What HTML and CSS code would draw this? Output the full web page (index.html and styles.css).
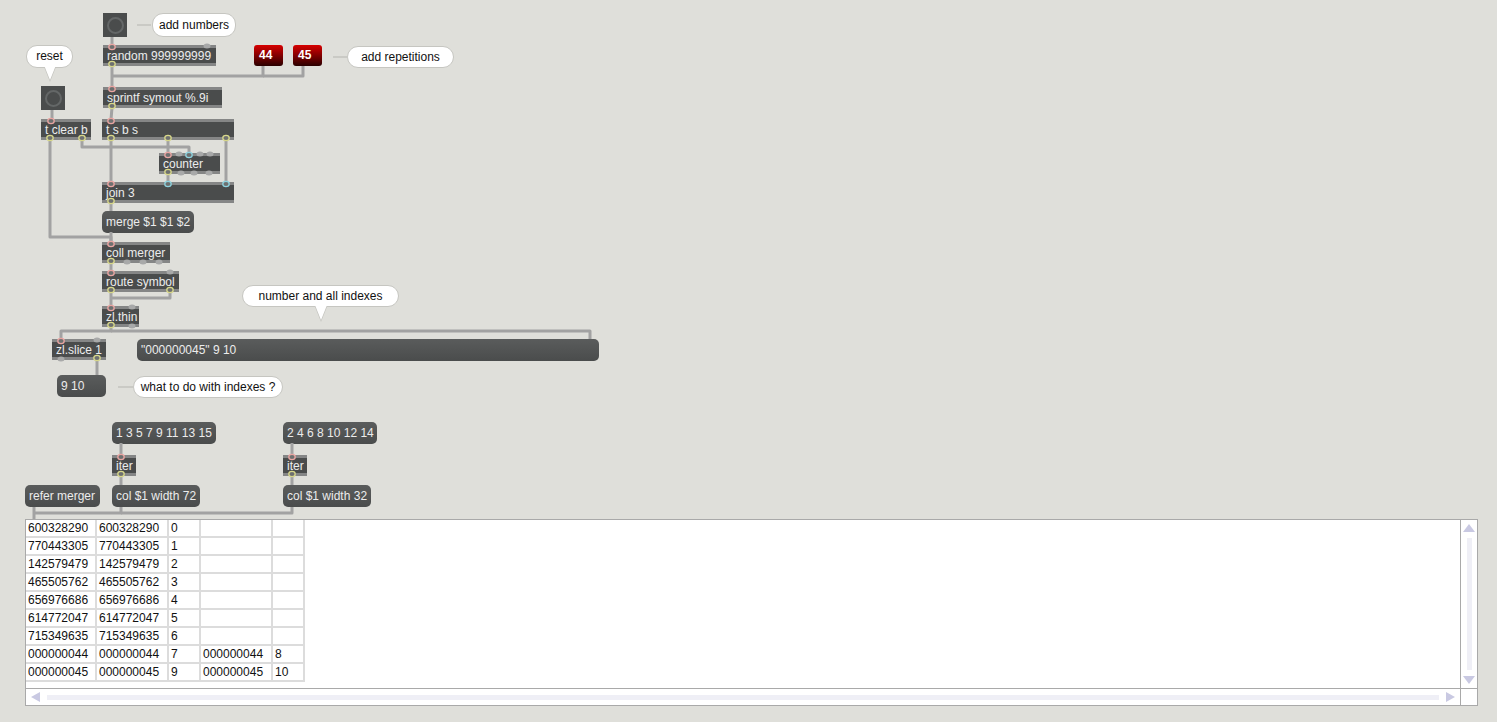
FILE: index.html
```html
<!DOCTYPE html>
<html lang="en">

<head>
    <meta charset="utf-8">
    <title>merger patch</title>
    <link rel="stylesheet" href="styles.css">
</head>

<body>
    <div class="patcher">
        <!-- top section: number generator -->
        <div class="bang bang-add"><span></span></div>
        <div class="cmt cmt-add">add numbers</div>
        <div class="obj o-random">random 999999999</div>
        <div class="num n44">44</div>
        <div class="num n45">45</div>
        <div class="cmt cmt-rep">add repetitions</div>
        <div class="cmt cmt-reset">reset</div>
        <div class="bang bang-reset"><span></span></div>
        <div class="obj o-sprintf">sprintf symout %.9i</div>
        <div class="obj o-tclear">t clear b</div>
        <div class="obj o-tsbs">t s b s</div>
        <div class="obj o-counter">counter</div>
        <div class="obj o-join">join 3</div>
        <div class="msg m-merge">merge $1 $1 $2</div>
        <div class="obj o-coll">coll merger</div>
        <div class="obj o-route">route symbol</div>
        <div class="cmt cmt-idx">number and all indexes</div>
        <div class="obj o-thin">zl.thin</div>
        <div class="obj o-slice">zl.slice 1</div>
        <div class="msg m-result">"000000045" 9 10</div>
        <div class="msg m-910">9 10</div>
        <div class="cmt cmt-what">what to do with indexes ?</div>

        <!-- column setup -->
        <div class="msg m-odd">1 3 5 7 9 11 13 15</div>
        <div class="msg m-even">2 4 6 8 10 12 14</div>
        <div class="obj o-iter1">iter</div>
        <div class="obj o-iter2">iter</div>
        <div class="msg m-refer">refer merger</div>
        <div class="msg m-col72">col $1 width 72</div>
        <div class="msg m-col32">col $1 width 32</div>

        <!-- cellblock -->
        <div class="cellblock">
            <div class="cells">
                <table>
                    <colgroup>
                        <col class="w72"><col class="w72b"><col class="w32"><col class="w72b"><col class="w32">
                    </colgroup>
                    <tr><td>600328290</td><td>600328290</td><td>0</td><td></td><td></td></tr>
                    <tr><td>770443305</td><td>770443305</td><td>1</td><td></td><td></td></tr>
                    <tr><td>142579479</td><td>142579479</td><td>2</td><td></td><td></td></tr>
                    <tr><td>465505762</td><td>465505762</td><td>3</td><td></td><td></td></tr>
                    <tr><td>656976686</td><td>656976686</td><td>4</td><td></td><td></td></tr>
                    <tr><td>614772047</td><td>614772047</td><td>5</td><td></td><td></td></tr>
                    <tr><td>715349635</td><td>715349635</td><td>6</td><td></td><td></td></tr>
                    <tr><td>000000044</td><td>000000044</td><td>7</td><td>000000044</td><td>8</td></tr>
                    <tr><td>000000045</td><td>000000045</td><td>9</td><td>000000045</td><td>10</td></tr>
                </table>
            </div>
            <div class="vscroll">
                <svg width="16" height="10"><polygon points="8,1 14,9 2,9"/></svg>
                <div class="vtrack"></div>
                <svg width="16" height="10"><polygon points="2,1 14,1 8,9"/></svg>
            </div>
            <div class="hscroll">
                <svg width="12" height="16"><polygon points="2,8 11,3 11,13"/></svg>
                <div class="htrack"></div>
                <svg width="12" height="16"><polygon points="1,3 10,8 1,13"/></svg>
            </div>
            <div class="corner"></div>
        </div>

        <!-- patch cords and ports -->
        <svg class="cords" width="1497" height="722">
            <g class="hint">
                <line x1="137" y1="25" x2="151" y2="25"/>
                <line x1="333" y1="57" x2="347" y2="57"/>
                <line x1="118" y1="387" x2="133" y2="387"/>
            </g>
            <g class="cord">
                <polyline points="112,37 112,45"/>
                <polyline points="112,66 112,87"/>
                <polyline points="263,66 263,76 112,76"/>
                <polyline points="303,66 303,76 263,76"/>
                <polyline points="112,108 111,119"/>
                <polyline points="52,110 52,119"/>
                <polyline points="50,140 50,237 111,237 111,242"/>
                <polyline points="82,140 82,147 189,147 189,153"/>
                <polyline points="111,140 111,182"/>
                <polyline points="168,140 168,153"/>
                <polyline points="226,140 226,182"/>
                <polyline points="168,174 168,182"/>
                <polyline points="111,203 111,211"/>
                <polyline points="111,232 111,242"/>
                <polyline points="111,263 111,271"/>
                <polyline points="111,292 111,306"/>
                <polyline points="170,292 170,298 111,298"/>
                <polyline points="111,327 111,331 61,331 61,339"/>
                <polyline points="111,331 590,331 590,339"/>
                <polyline points="97,360 97,375"/>
                <polyline points="121,443 121,455"/>
                <polyline points="121,476 121,485"/>
                <polyline points="292,443 292,455"/>
                <polyline points="292,476 292,485"/>
                <polyline points="34,507 34,519"/>
                <polyline points="121,507 121,513 34,513"/>
                <polyline points="292,507 292,513 121,513"/>
            </g>
            <g class="port-off">
                <ellipse cx="207" cy="46" rx="3.5" ry="2.5"/>
                <ellipse cx="179" cy="154" rx="3.5" ry="2.5"/>
                <ellipse cx="200" cy="154" rx="3.5" ry="2.5"/>
                <ellipse cx="210" cy="154" rx="3.5" ry="2.5"/>
                <ellipse cx="181" cy="173" rx="3.5" ry="2.5"/>
                <ellipse cx="194" cy="173" rx="3.5" ry="2.5"/>
                <ellipse cx="209" cy="173" rx="3.5" ry="2.5"/>
                <ellipse cx="127" cy="262" rx="3.5" ry="2.5"/>
                <ellipse cx="143" cy="262" rx="3.5" ry="2.5"/>
                <ellipse cx="159" cy="262" rx="3.5" ry="2.5"/>
                <ellipse cx="170" cy="272" rx="3.5" ry="2.5"/>
                <ellipse cx="132" cy="307" rx="3.5" ry="2.5"/>
                <ellipse cx="132" cy="326" rx="3.5" ry="2.5"/>
                <ellipse cx="97" cy="340" rx="3.5" ry="2.5"/>
                <ellipse cx="61" cy="359" rx="3.5" ry="2.5"/>
            </g>
            <g class="port-hot">
                <ellipse cx="112" cy="47" rx="3.2" ry="2.6"/>
                <ellipse cx="112" cy="89" rx="3.2" ry="2.6"/>
                <ellipse cx="51" cy="121" rx="3.2" ry="2.6"/>
                <ellipse cx="111" cy="121" rx="3.2" ry="2.6"/>
                <ellipse cx="168" cy="155" rx="3.2" ry="2.6"/>
                <ellipse cx="111" cy="184" rx="3.2" ry="2.6"/>
                <ellipse cx="111" cy="244" rx="3.2" ry="2.6"/>
                <ellipse cx="111" cy="273" rx="3.2" ry="2.6"/>
                <ellipse cx="111" cy="308" rx="3.2" ry="2.6"/>
                <ellipse cx="61" cy="341" rx="3.2" ry="2.6"/>
                <ellipse cx="121" cy="457" rx="3.2" ry="2.6"/>
                <ellipse cx="292" cy="457" rx="3.2" ry="2.6"/>
            </g>
            <g class="port-cold">
                <ellipse cx="189" cy="155" rx="3.2" ry="2.6"/>
                <ellipse cx="168" cy="184" rx="3.2" ry="2.6"/>
                <ellipse cx="226" cy="184" rx="3.2" ry="2.6"/>
            </g>
            <g class="port-out">
                <ellipse cx="112" cy="64" rx="3.2" ry="2.6"/>
                <ellipse cx="112" cy="106" rx="3.2" ry="2.6"/>
                <ellipse cx="50" cy="138" rx="3.2" ry="2.6"/>
                <ellipse cx="82" cy="138" rx="3.2" ry="2.6"/>
                <ellipse cx="111" cy="138" rx="3.2" ry="2.6"/>
                <ellipse cx="168" cy="138" rx="3.2" ry="2.6"/>
                <ellipse cx="226" cy="138" rx="3.2" ry="2.6"/>
                <ellipse cx="168" cy="172" rx="3.2" ry="2.6"/>
                <ellipse cx="111" cy="201" rx="3.2" ry="2.6"/>
                <ellipse cx="111" cy="261" rx="3.2" ry="2.6"/>
                <ellipse cx="111" cy="290" rx="3.2" ry="2.6"/>
                <ellipse cx="170" cy="290" rx="3.2" ry="2.6"/>
                <ellipse cx="111" cy="325" rx="3.2" ry="2.6"/>
                <ellipse cx="97" cy="358" rx="3.2" ry="2.6"/>
                <ellipse cx="121" cy="474" rx="3.2" ry="2.6"/>
                <ellipse cx="292" cy="474" rx="3.2" ry="2.6"/>
            </g>
        </svg>
    </div>
</body>

</html>
```

FILE: styles.css
```css
html {
    font-family: "Liberation Sans", Arial, sans-serif;
    font-size: 12px;
}

body {
    margin: 0;
    background-color: #dfdfda;
}

.patcher {
    position: relative;
    width: 1497px;
    height: 722px;
    overflow: hidden;
}

/* object boxes */
.obj {
    position: absolute;
    box-sizing: border-box;
    height: 21px;
    padding-left: 4px;
    background-color: #4a4c4c;
    border-top: 3px solid #858686;
    border-bottom: 3px solid #858686;
    color: #ececec;
    line-height: 16px;
    white-space: nowrap;
}

.msg {
    position: absolute;
    box-sizing: border-box;
    height: 22px;
    padding-left: 4px;
    border-radius: 5px;
    background: linear-gradient(#5a5c5c, #4a4c4c);
    color: #ececec;
    line-height: 22px;
    white-space: nowrap;
}

.cmt {
    position: absolute;
    box-sizing: border-box;
    height: 22px;
    background-color: white;
    border: 1px solid #c6c6c1;
    border-radius: 11px;
    color: #111;
    text-align: center;
    line-height: 20px;
    white-space: nowrap;
}

.bang {
    position: absolute;
    width: 24px;
    height: 24px;
    background-color: #4a4c4c;
    display: flex;
    align-items: center;
    justify-content: center;
}

.bang span {
    width: 13px;
    height: 13px;
    border: 2px solid #646767;
    border-radius: 50%;
}

.num {
    position: absolute;
    box-sizing: border-box;
    width: 29px;
    height: 21px;
    padding-left: 5px;
    border-radius: 3px;
    background: linear-gradient(#d80000, #2a0000);
    color: white;
    font-weight: bold;
    line-height: 21px;
}

/* bubble pointers */
.cmt-reset::before,
.cmt-reset::after,
.cmt-idx::before,
.cmt-idx::after {
    content: "";
    position: absolute;
    left: 50%;
    border-left: 6px solid transparent;
    border-right: 6px solid transparent;
}

.cmt-reset::before,
.cmt-idx::before {
    top: 21px;
    margin-left: -6px;
    border-top: 15px solid #c6c6c1;
}

.cmt-reset::after,
.cmt-idx::after {
    top: 19px;
    margin-left: -6px;
    border-top: 15px solid white;
}

/* placement on the canvas */
.bang-add { left: 103px; top: 13px; }
.bang-reset { left: 41px; top: 86px; }
.cmt-add { left: 152px; top: 13px; width: 84px; height: 24px; line-height: 22px; }
.cmt-rep { left: 347px; top: 46px; width: 107px; }
.cmt-reset { left: 26px; top: 45px; width: 47px; height: 23px; line-height: 21px; }
.cmt-idx { left: 242px; top: 285px; width: 157px; }
.cmt-what { left: 133px; top: 376px; width: 150px; }
.n44 { left: 254px; top: 45px; }
.n45 { left: 293px; top: 45px; }

.o-random { left: 103px; top: 45px; width: 113px; }
.o-sprintf { left: 103px; top: 87px; width: 119px; }
.o-tclear { left: 41px; top: 119px; width: 50px; }
.o-tsbs { left: 102px; top: 119px; width: 132px; }
.o-counter { left: 159px; top: 153px; width: 61px; }
.o-join { left: 102px; top: 182px; width: 132px; }
.m-merge { left: 102px; top: 211px; width: 92px; }
.o-coll { left: 102px; top: 242px; width: 68px; }
.o-route { left: 102px; top: 271px; width: 77px; }
.o-thin { left: 102px; top: 306px; width: 37px; }
.o-slice { left: 52px; top: 339px; width: 54px; }
.m-result { left: 137px; top: 339px; width: 462px; }
.m-910 { left: 57px; top: 375px; width: 49px; }

.m-odd { left: 112px; top: 422px; width: 104px; }
.m-even { left: 283px; top: 422px; width: 94px; }
.o-iter1 { left: 112px; top: 455px; width: 24px; }
.o-iter2 { left: 283px; top: 455px; width: 24px; }
.m-refer { left: 25px; top: 485px; width: 75px; }
.m-col72 { left: 112px; top: 485px; width: 88px; }
.m-col32 { left: 283px; top: 485px; width: 88px; }

/* cellblock */
.cellblock {
    position: absolute;
    left: 25px;
    top: 519px;
    box-sizing: border-box;
    width: 1453px;
    height: 187px;
    border: 1px solid #a9a9a9;
    background-color: white;
    display: grid;
    grid-template-columns: 1fr 17px;
    grid-template-rows: 1fr 17px;
}

.cells {
    overflow: hidden;
}

table {
    border-collapse: separate;
    border-spacing: 0;
    table-layout: fixed;
    width: 279px;
}

.w72 { width: 71px; }
.w72b { width: 72px; }
.w32 { width: 32px; }

td {
    box-sizing: border-box;
    height: 18px;
    padding: 1px 0 0 2px;
    border-right: 2px solid #dcdcdc;
    border-bottom: 2px solid #dcdcdc;
    color: #111;
    line-height: 15px;
    white-space: nowrap;
    overflow: hidden;
}

.vscroll {
    border-left: 1px solid #a9a9a9;
    display: flex;
    flex-direction: column;
    align-items: center;
    padding: 3px 0;
}

.vtrack {
    flex: 1;
    width: 5px;
    margin: 5px 0;
    background-color: #efeff6;
}

.hscroll {
    border-top: 1px solid #a9a9a9;
    display: flex;
    align-items: center;
    padding: 0 3px;
}

.htrack {
    flex: 1;
    height: 5px;
    margin: 0 6px;
    background-color: #efeff6;
}

.corner {
    border-top: 1px solid #a9a9a9;
    border-left: 1px solid #a9a9a9;
}

.vscroll polygon,
.hscroll polygon {
    fill: #c9c9e2;
}

/* cords */
.cords {
    position: absolute;
    left: 0;
    top: 0;
    pointer-events: none;
}

.cord polyline {
    fill: none;
    stroke: #a2a2a2;
    stroke-width: 3;
    stroke-linejoin: round;
}

.hint line {
    stroke: #cacac5;
    stroke-width: 2;
}

.port-off ellipse {
    fill: #a8a9a9;
}

.port-hot ellipse,
.port-cold ellipse,
.port-out ellipse {
    fill: #6e7070;
    stroke-width: 1.3;
}

.port-hot ellipse { stroke: #eaa5a2; }
.port-cold ellipse { stroke: #8ed3df; }
.port-out ellipse { stroke: #d8d88a; }
```
